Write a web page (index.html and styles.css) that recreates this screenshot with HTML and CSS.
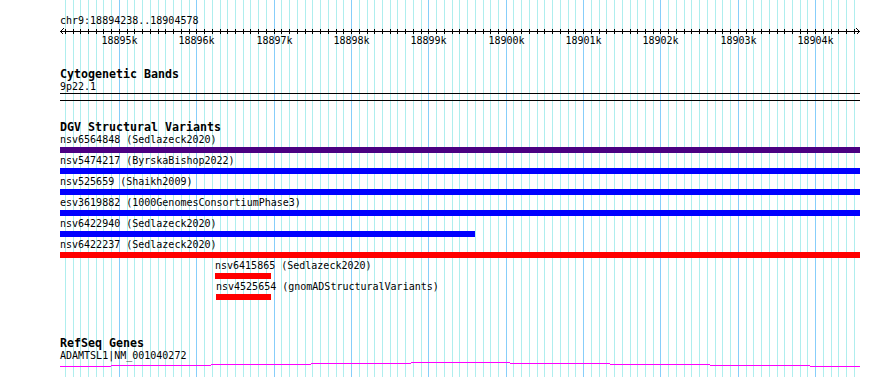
FILE: index.html
```html
<!DOCTYPE html>
<html lang="en">

<head>
    <meta charset="UTF-8">
    <title>chr9:18894238..18904578</title>

    <link rel="stylesheet" href="styles.css">
</head>

<body>
    <div class="panel">
        <svg id="grid" class="grid" width="890" height="377"></svg>

        <div class="ruler">
            <div class="ruler-label">chr9:18894238..18904578</div>
            <svg id="rulerAxis" class="ruler-axis" width="801" height="8"></svg>
            <div id="rulerTicks" class="ruler-ticks"></div>
        </div>

        <div class="track track-cyto">
            <div class="track-title">Cytogenetic Bands</div>
            <div class="feature-label">9p22.1</div>
            <div class="band"></div>
        </div>

        <div class="track track-dgv">
            <div class="track-title">DGV Structural Variants</div>
            <div id="dgvRows"></div>
        </div>

        <div class="track track-genes">
            <div class="track-title">RefSeq Genes</div>
            <div class="feature-label gene-label">ADAMTSL1|NM_001040272</div>
            <svg id="geneLine" class="gene-line" width="800" height="8"></svg>
        </div>
    </div>

    <script>
        const START = 18894238;
        const END = 18904578;
        const LEFT = 60;
        const WIDTH = 800;
        const SCALE = WIDTH / (END - START + 1);
        const SVG_NS = 'http://www.w3.org/2000/svg';

        // x and w are pixel offsets inside the 800px track area
        const variants = [
            { id: 'nsv6564848', study: 'Sedlazeck2020', x: 0, w: 800, type: 'both' },
            { id: 'nsv5474217', study: 'ByrskaBishop2022', x: 0, w: 800, type: 'gain' },
            { id: 'nsv525659', study: 'Shaikh2009', x: 0, w: 800, type: 'gain' },
            { id: 'esv3619882', study: '1000GenomesConsortiumPhase3', x: 0, w: 800, type: 'gain' },
            { id: 'nsv6422940', study: 'Sedlazeck2020', x: 0, w: 415, type: 'gain' },
            { id: 'nsv6422237', study: 'Sedlazeck2020', x: 0, w: 800, type: 'loss' },
            { id: 'nsv6415865', study: 'Sedlazeck2020', x: 155, w: 56, type: 'loss' },
            { id: 'nsv4525654', study: 'gnomADStructuralVariants', x: 156, w: 55, type: 'loss' }
        ];

        function bpToX(bp) {
            return Math.round((bp - START) * SCALE);
        }

        function svgEl(name, attrs) {
            const el = document.createElementNS(SVG_NS, name);
            for (const key in attrs) {
                el.setAttribute(key, attrs[key]);
            }
            return el;
        }

        function drawGrid() {
            const grid = document.getElementById('grid');
            for (let bp = Math.ceil(START / 100) * 100; bp <= END; bp += 100) {
                grid.appendChild(svgEl('rect', {
                    x: LEFT + bpToX(bp), y: 0, width: 1, height: 377,
                    class: bp % 1000 === 0 ? 'grid-major' : 'grid-minor'
                }));
            }
        }

        function drawRuler() {
            const axis = document.getElementById('rulerAxis');
            const ticks = document.getElementById('rulerTicks');

            axis.appendChild(svgEl('rect', { x: 0, y: 4, width: WIDTH, height: 1 }));
            axis.appendChild(svgEl('path', { d: 'M3.5 1.5 L0.5 4.5 L3.5 7.5', class: 'arrow' }));
            axis.appendChild(svgEl('path', { d: 'M796.5 1.5 L799.5 4.5 L796.5 7.5', class: 'arrow' }));

            for (let bp = Math.ceil(START / 100) * 100; bp <= END; bp += 100) {
                const x = bpToX(bp);
                axis.appendChild(svgEl('rect', { x: x, y: 2, width: 1, height: 5 }));

                if (bp % 1000 === 0) {
                    const label = document.createElement('span');
                    label.className = 'tick-label';
                    label.textContent = (bp / 1000) + 'k';
                    label.style.left = (x + 0.5) + 'px';
                    ticks.appendChild(label);
                }
            }
        }

        function drawVariants() {
            const rows = document.getElementById('dgvRows');
            variants.forEach(v => {
                const row = document.createElement('div');
                row.className = 'sv';
                row.style.marginLeft = v.x + 'px';

                const label = document.createElement('div');
                label.className = 'feature-label';
                label.textContent = v.id + ' (' + v.study + ')';

                const bar = document.createElement('div');
                bar.className = 'sv-bar sv-' + v.type;
                bar.style.width = v.w + 'px';

                row.appendChild(label);
                row.appendChild(bar);
                rows.appendChild(row);
            });
        }

        function drawGene() {
            // intron drawn as a flat hat, peak in the middle
            const line = document.getElementById('geneLine');
            let segStart = 0;
            let prevRow = null;
            for (let x = 0; x <= WIDTH; x++) {
                const row = x < WIDTH ? Math.round(1 + Math.abs(x - WIDTH / 2) / 100) : null;
                if (row !== prevRow) {
                    if (prevRow !== null) {
                        line.appendChild(svgEl('rect', { x: segStart, y: prevRow, width: x - segStart, height: 1 }));
                    }
                    segStart = x;
                    prevRow = row;
                }
            }
        }

        drawGrid();
        drawRuler();
        drawVariants();
        drawGene();
    </script>
</body>

</html>
```

FILE: styles.css
```css
body {
    margin: 0;
    background-color: #ffffff;
    color: #000000;
    font-family: 'DejaVu Sans Mono', 'Liberation Mono', monospace;
    font-size: 10px;
}

.panel {
    position: relative;
    width: 890px;
    height: 377px;
    padding-top: 15px;
    box-sizing: border-box;
    overflow: hidden;
}

.grid {
    position: absolute;
    top: 0;
    left: 0;
}

.grid-minor {
    fill: #afeeee;
}

.grid-major {
    fill: #87cefa;
}

.ruler,
.track {
    position: relative;
}

.ruler-label {
    padding-left: 60px;
    line-height: 12px;
}

.ruler-axis {
    display: block;
    margin-left: 60px;
    shape-rendering: crispEdges;
}

.ruler-axis .arrow {
    fill: none;
    stroke: #000000;
    stroke-width: 1;
}

.ruler-ticks {
    position: relative;
    margin-left: 60px;
    width: 800px;
    height: 12px;
    line-height: 12px;
}

.tick-label {
    position: absolute;
    top: 0;
    transform: translateX(-50%);
    white-space: nowrap;
}

.track {
    padding-left: 60px;
    width: 800px;
}

.track-title {
    font-weight: bold;
    font-size: 11.63px;
    line-height: 13px;
    white-space: nowrap;
}

.feature-label {
    line-height: 12px;
    white-space: nowrap;
}

/* Cytogenetic band, whole view sits inside one band */
.track-cyto {
    margin-top: 21px;
}

.band {
    height: 6px;
    border-top: 1px solid #000000;
    border-bottom: 1px solid #000000;
}

/* DGV */
.track-dgv {
    margin-top: 20px;
}

.sv {
    height: 21px;
}

.sv-bar {
    height: 6px;
    margin-top: 1px;
}

.sv-both {
    background-color: #4b0082;
}

.sv-gain {
    background-color: #0000ff;
}

.sv-loss {
    background-color: #ff0000;
}

/* Genes */
.track-genes {
    margin-top: 35px;
}

.gene-label {
    line-height: 11px;
}

.gene-line {
    display: block;
    fill: #ff00ff;
    shape-rendering: crispEdges;
}
```
